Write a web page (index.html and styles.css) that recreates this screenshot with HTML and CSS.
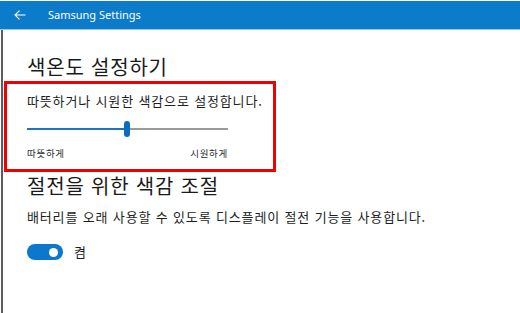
FILE: index.html
```html
<!DOCTYPE html>
<html lang="ko">
<head>
<meta charset="utf-8">
<title>Samsung Settings</title>
<link rel="stylesheet" href="styles.css">
</head>
<body>
<div class="window">
  <header class="titlebar">
    <svg class="back" width="12" height="10" viewBox="0 0 12 10" aria-hidden="true">
      <path d="M11.5 5H1M5.5 0.6L1 5l4.5 4.4" fill="none" stroke="#fff" stroke-width="1.1"/>
    </svg>
    <span class="app-title">Samsung Settings</span>
  </header>
  <main class="content">
    <h1 class="heading">색온도 설정하기</h1>
    <section class="highlight">
      <p class="desc">따뜻하거나 시원한 색감으로 설정합니다.</p>
      <div class="slider">
        <div class="track-fill"></div>
        <div class="thumb"></div>
        <div class="track-rest"></div>
      </div>
      <div class="slider-labels">
        <span>따뜻하게</span>
        <span>시원하게</span>
      </div>
    </section>
    <h2 class="heading heading2">절전을 위한 색감 조절</h2>
    <p class="desc desc2">배터리를 오래 사용할 수 있도록 디스플레이 절전 기능을 사용합니다.</p>
    <div class="toggle-row">
      <div class="toggle"><div class="knob"></div></div>
      <span class="toggle-label">켬</span>
    </div>
  </main>
</div>
</body>
</html>
```
FILE: styles.css
```css
html, body {
  margin: 0;
  padding: 0;
  background: #fff;
}
body {
  width: 520px;
  height: 313px;
  overflow: hidden;
  font-family: "Noto Sans CJK KR", "Noto Sans", sans-serif;
  color: #1e1e1e;
}
.window {
  display: flex;
  flex-direction: column;
  height: 313px;
}
.titlebar {
  margin-top: 1px;
  height: 28px;
  background: #0b7bca;
  border-bottom: 1px solid #93c7ec;
  display: flex;
  align-items: center;
  padding-left: 14px;
  box-sizing: content-box;
}
.back {
  display: block;
}
.app-title {
  margin-left: 22px;
  color: #fff;
  font-family: "Noto Sans", sans-serif;
  font-size: 11px;
  line-height: 14px;
}
.content {
  flex: 1;
  margin-left: 1px;
  border-left: 2px solid #5c5c5c;
  padding-left: 24px;
  padding-top: 23px;
}
.heading {
  margin: 0;
  font-size: 20px;
  line-height: 28px;
  font-weight: 400;
  letter-spacing: 0.8px;
  color: #1a1a1a;
}
.highlight {
  margin: 0 0 0 -23px;
  width: 246px;
  border: 3px solid #f20000;
  padding: 8px 0 9px 20px;
  white-space: nowrap;
}
.desc {
  margin: 0;
  font-size: 13px;
  line-height: 18px;
  letter-spacing: 0.85px;
}
.slider {
  margin-top: 11px;
  width: 201px;
  height: 16px;
  display: flex;
  align-items: center;
}
.track-fill {
  width: 97px;
  height: 2px;
  background: #1b74c0;
}
.thumb {
  width: 6px;
  height: 16px;
  border-radius: 3px;
  background: #0a6cbf;
}
.track-rest {
  flex: 1;
  height: 2px;
  background: #9a9a9a;
}
.slider-labels {
  margin-top: 10px;
  width: 201px;
  display: flex;
  justify-content: space-between;
  font-size: 9.5px;
  line-height: 13px;
  letter-spacing: 0.7px;
  color: #2a2a2a;
}
.heading2 {
  margin-top: 0;
}
.desc2 {
  margin-top: 8px;
}
.toggle-row {
  margin-top: 17px;
  display: flex;
  align-items: center;
}
.toggle {
  width: 36px;
  height: 16px;
  border-radius: 8px;
  background: #0b78ce;
  display: flex;
  align-items: center;
  justify-content: flex-end;
  padding-right: 5px;
  box-sizing: border-box;
}
.knob {
  width: 9px;
  height: 9px;
  border-radius: 50%;
  background: #fff;
}
.toggle-label {
  margin-left: 11px;
  font-size: 13px;
  line-height: 18px;
}
```
